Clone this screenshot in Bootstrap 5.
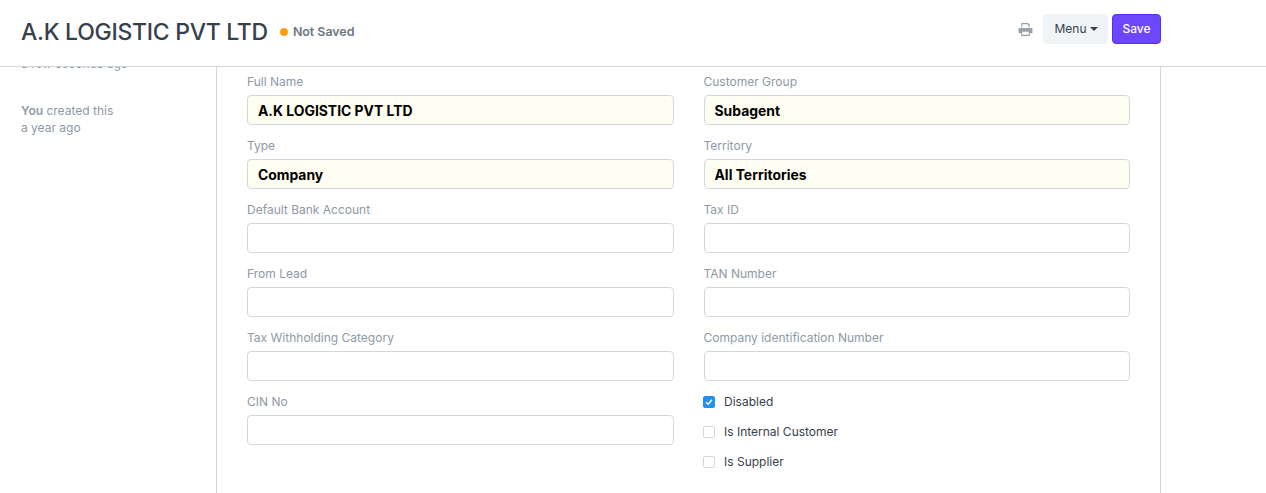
<!DOCTYPE html>
<html lang="en">
<head>
<meta charset="utf-8">
<title>A.K LOGISTIC PVT LTD</title>
<link rel="stylesheet" href="https://cdn.jsdelivr.net/npm/bootstrap@5.3.0/dist/css/bootstrap.min.css">
<style>
html,body{height:493px;overflow:hidden;background:#fff}
body{font-family:Inter,"Liberation Sans",sans-serif;font-size:13px;color:#36414c}
.page-head{height:67px;border-bottom:1px solid #d1d8dd;background:#fff;padding:0 105px 0 21px;position:relative;z-index:2}
.head-left{padding-bottom:2px}
.head-right{padding-bottom:8px}
.page-title{font-size:23px;font-weight:500;color:#36414c;margin:0;line-height:1;letter-spacing:-.28px}
.status-dot{width:8px;height:8px;border-radius:50%;background:#ff9f0f;display:inline-block;margin:0 5px 0 12px}
.status-text{font-size:12.4px;font-weight:600;color:#6c7680}
.print-ico{width:15px;height:15px;margin-right:10px;fill:#98a1a9}
.menu-btn{background:#f0f4f7;border:0;color:#36414c;font-size:12px;height:30px;width:65px;padding:0 0 0 1px;border-radius:4px}
.menu-btn::after{content:"";display:inline-block;border-top:4px solid #36414c;border-left:4px solid transparent;border-right:4px solid transparent;margin-left:3px;vertical-align:2px}
.save-btn{background:#6d46ff;border:1px solid #5b2ee8;color:#fff;font-size:12px;font-weight:500;height:30px;width:49px;padding:0;border-radius:4px;margin-left:4px}
.body-wrap{height:426px;overflow:hidden;padding-right:105px}
.side-col{width:217px;flex:none;border-right:1px solid #d1d8dd;padding-left:21px;font-size:12px;color:#8d99a6;line-height:17px}
.side-old{margin-top:-12px;margin-bottom:30px}
.side-you{font-weight:600}
.form-col{flex:1;min-width:0;padding:0 30px;border-right:1px solid #d1d8dd}
.form-grid{--bs-gutter-x:30px;--bs-gutter-y:0}
.field-box{height:64px;padding-top:7px}
.field-label{font-size:12px;line-height:16px;color:#8d99a6;margin:0 0 5px;display:block}
.field-input{height:30px;border:1px solid #d1d8dd;border-radius:4px;background:#fff;font-size:13.9px;font-weight:700;color:#000;padding:1px 10px 0;box-shadow:none}
.field-input:focus{border-color:#d1d8dd;box-shadow:none}
.field-input.is-req{background:#fffef3}
.check-box{height:30px;font-size:12px;color:#36414c;gap:9px;margin-left:-.5px}
.check-mark{width:12px;height:12px;border:1px solid #d1d8dd;border-radius:2px;background:#fff;flex:none;margin:0}
.check-mark.on{background:#2490ef;border-color:#2490ef;display:flex;align-items:center;justify-content:center}
</style>
</head>
<body>
<header class="page-head d-flex align-items-center justify-content-between">
  <div class="head-left d-flex align-items-center">
    <h1 class="page-title">A.K LOGISTIC PVT LTD</h1>
    <span class="status-dot"></span><span class="status-text">Not Saved</span>
  </div>
  <div class="head-right d-flex align-items-center">
    <svg class="print-ico" viewBox="0 0 14 14" aria-hidden="true"><path d="M3 1h6.500L11 2.500V5H3zM4 2v3h6V3H9V2zM1.500 5.500h11c.6 0 1 .4 1 1V10c0 .3-.2.5-.5.5h-2V13H3v-2.500H1c-.3 0-.5-.2-.5-.5V6.500c0-.6.4-1 1-1zM4 9v3h6V9z"/></svg>
    <button type="button" class="btn menu-btn">Menu</button>
    <button type="button" class="btn save-btn">Save</button>
  </div>
</header>
<main class="body-wrap d-flex">
  <aside class="side-col">
    <div class="side-old">a few seconds ago</div>
    <div><span class="side-you">You</span> created this<br>a year ago</div>
  </aside>
  <section class="form-col">
    <div class="row form-grid">
      <div class="col-6">
        <div class="field-box"><label class="field-label">Full Name</label><input class="form-control field-input is-req" value="A.K LOGISTIC PVT LTD"></div>
        <div class="field-box"><label class="field-label">Type</label><input class="form-control field-input is-req" value="Company"></div>
        <div class="field-box"><label class="field-label">Default Bank Account</label><input class="form-control field-input"></div>
        <div class="field-box"><label class="field-label">From Lead</label><input class="form-control field-input"></div>
        <div class="field-box"><label class="field-label">Tax Withholding Category</label><input class="form-control field-input"></div>
        <div class="field-box"><label class="field-label">CIN No</label><input class="form-control field-input"></div>
      </div>
      <div class="col-6">
        <div class="field-box"><label class="field-label">Customer Group</label><input class="form-control field-input is-req" value="Subagent"></div>
        <div class="field-box"><label class="field-label">Territory</label><input class="form-control field-input is-req" value="All Territories"></div>
        <div class="field-box"><label class="field-label">Tax ID</label><input class="form-control field-input"></div>
        <div class="field-box"><label class="field-label">TAN Number</label><input class="form-control field-input"></div>
        <div class="field-box"><label class="field-label">Company identification Number</label><input class="form-control field-input"></div>
        <div>
          <div class="check-box d-flex align-items-center"><span class="check-mark on"><svg width="8" height="8" viewBox="0 0 8 8" aria-hidden="true"><path d="M1 4.200 3.100 6.200 7 1.800" fill="none" stroke="#fff" stroke-width="1.500"/></svg></span><span>Disabled</span></div>
          <div class="check-box d-flex align-items-center"><span class="check-mark"></span><span>Is Internal Customer</span></div>
          <div class="check-box d-flex align-items-center"><span class="check-mark"></span><span>Is Supplier</span></div>
        </div>
      </div>
    </div>
  </section>
</main>
<script src="https://cdn.jsdelivr.net/npm/bootstrap@5.3.0/dist/js/bootstrap.bundle.min.js"></script>
</body>
</html>
